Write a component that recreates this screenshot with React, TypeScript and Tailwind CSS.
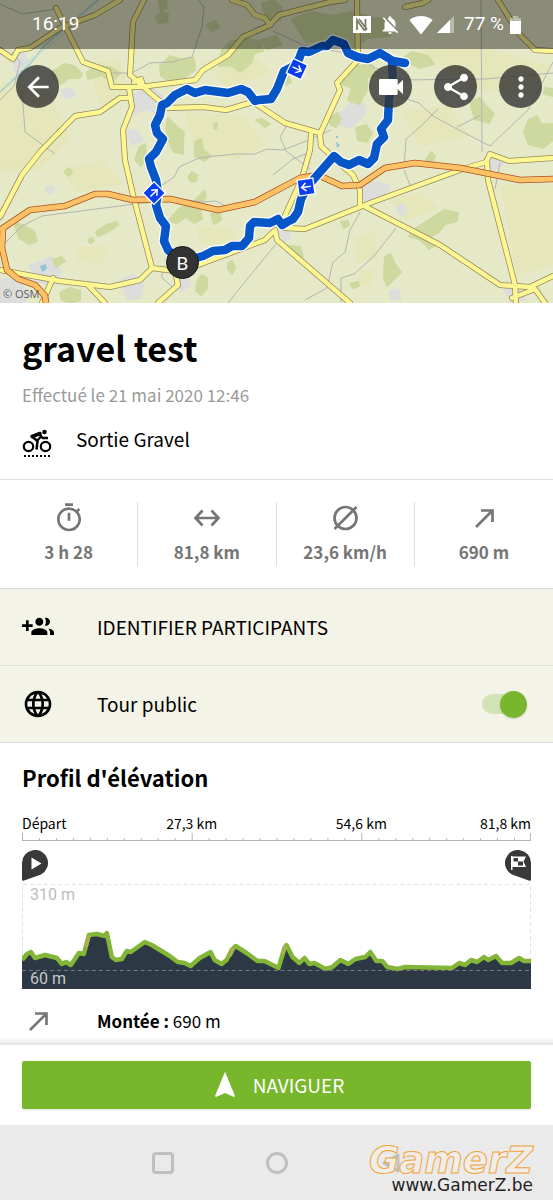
import { useState } from "react";
import type { ReactNode } from "react";
import {
  MdArrowBack,
  MdLanguage,
  MdMoreVert,
  MdNavigation,
  MdNotificationsOff,
  MdOutlineTimer,
  MdShare,
  MdSignalWifi4Bar,
  MdVideocam,
} from "react-icons/md";

const FOREST = [
  "M52 72l12-8 10 2 8 8-3 4-10 0-8 6-7-5z",
  "M159 1l7-1 1 8-6 4z",
  "M156 18l5-5 7 1-1 8-8 1z",
  "M207 25l8-4 4 6-7 4z",
  "M222 50l8-8 14-4 16 3 3 10-9 2-3 10-11 9-9-7-12 1z",
  "M160 66l10-10 10 3 14-1 1 12-12 9-14 2-8-5z",
  "M168 118l8 8 8 6-1 10 0 12-9-2-5-10-3-12z",
  "M195 142l6-3 2 11 8 6-7 5-9-5z",
  "M87 72l10-6 13 1 10 6-8 9-10-7-14 4z",
  "M262 4l12-4 8 8-2 12-14-2z",
  "M262 40l14-4 6 9-16 4z",
  "M292 20l18-8 22 4 20-4 22 6 20 2-4 16-22 2-16 10-22-8-24 2z",
  "M345 74l12-8 14-2 6 10-10 4 0 12-8 14-11-4 4-12-10-4z",
  "M356 128l10-3 6 8-5 9-9-2z",
  "M400 60l12-8 16 4 6 8-14 4-8-4z",
  "M470 102l10-4 6 8 8 8-5 9-14-4z",
  "M524 132l5-12 8-4 4 8 12 0 0 16-10 8-14-4z",
  "M416 228l16-10 12-8 14 3-1 8-12 3-6 8-8 4 5 9-7 4-8-9-12-4z",
  "M385 257l5-3 5 10 6 8-6 6-8 8-3-8z",
  "M96 232l10-7 11-3 1 3-12 8-8 3z",
  "M88 240l4-2 2 3-4 2z",
  "M66 170l3-2 3 4-3 4-4-3z",
  "M168 221l12-13 12-4 12-13 2 4-6 14 2 10-8 4-8-6-9 6z",
  "M188 177l4-5 5 3-1 6-5 1z",
  "M211 214l9 0 1 6-7 4z",
  "M14 222l8 3 12 6 3 10-8 3-10-6z",
  "M53 260l8-3 4 4-9 6z",
  "M60 293l10-5 10 3 0 9-9 3-9-3z",
  "M197 282l5-7 5 3 0 10-6 7-5-4z",
  "M228 263l4-2 3 6-3 7-4-5z",
  "M135 160l4-12 6-4 1 12-5 10z",
  "M288 246l12 1 3 10-10-4z",
  "M341 222l7-1 1 4-5 3z",
  "M350 284l8-2 1 4-6 2z",
  "M426 160l5-8 4 4-2 6z",
  "M545 88l8 1 0 7-9-2z",
  "M214 124l3-1 0 5-3 1z",
  "M256 120l6-1 8 5-5 3z",
  "M331 117l6-4 4 6-5 8-6-3z",
  "M284 79l4-3 3 6-5 3z",
];

const MEADOW = [
  "M0 80L50 92 70 140 40 170 0 172z",
  "M88 62l32-2 10 40-30 6z",
  "M185 112l60 4 20 30-30 14-40-8z",
  "M0 130l30-15 18 40-48 12z",
  "M62 170l40-10 20 24-45 8z",
  "M200 62l50-10 20 20-40 16z",
  "M420 50l60-4 70 20-20 30-60-8z",
  "M400 112l50-6 20 30-50 10z",
  "M500 185l53 0 0 80-36 10z",
  "M355 238l20-6 2 26-22 5z",
  "M76 245l32 2-4 18-26-4z",
  "M196 226l36 2 4 14-36 2z",
  "M390 200l30-8 18 16-32 12z",
  "M360 270l14 0-4 18-14-4z",
];

const TOWN = [
  "M134 94l16-6 14 10-2 14-18-3-10 4z",
  "M62 91l9-2 4 6-9 3z",
  "M14 58l8-6 6 10-8 14-6-6z",
  "M345 110l8-10 10 3 2 10-14 14-12-4z",
  "M336 116l5-4 5 8-5 5z",
  "M361 188l14-6 14 4-8 13-16 2z",
  "M372 190l10-4 3 6-9 4z",
  "M397 208l6-3 3 6-5 4z",
  "M30 266l22-8 8 12-4 14-18-3z",
  "M0 280l16 0 14 14-8 9-22 0z",
  "M122 280l10-5 11 8-3 14-12 2z",
  "M172 274l14 2 4 9-10 6z",
  "M46 188l6-1 2 4-6 2z",
  "M487 153l12 3 4 8-11 6z",
  "M504 287l16-2 4 14-13 2z",
  "M278 228l10 0 2 10-8 4z",
  "M128 132l8-2 6 10-10 4z",
  "M390 292l8-2 2 8-7 2z",
];

const TRACKS = [
  "M0 4l22 10 34-5",
  "M0 100l14-14 6-24-8-10",
  "M22 90l3 42 30 22",
  "M112 73l20 0 18-10 22-1 20-5 10-30 2-20-12-16-26-2",
  "M158 188l16-11 5-10 20-9 16-2 22-2 18 0 12-5 16 1 26-10 22-10",
  "M0 248l14-14 8-8 20-10 93-12 45-5 22 3 14-1 11 6",
  "M228 303l20-25 28-34",
  "M162 270l0 8 14 12",
  "M273 31l30 14 42 8 55 27 85-1 68-6",
  "M481 0l1 152",
  "M395 95l24 8 14 13 24 13 33 17 38-36 25-48",
  "M420 127l-14 12-2 30",
  "M420 127l18-18",
  "M457 127l24-12",
  "M360 212l-10 18-5 22-12 10-6 26-22 12",
  "M396 228l-22 28-20 18-13 4 0 24",
  "M404 170l6 15",
  "M500 163l-5 26",
  "M273 175l20-16 20-8",
  "M287 125l-7 12 6 14 24 18",
];

const ROADS = [
  "M0 50L13 59 18 50 30 48 60 28 95 15 120 0",
  "M56 8L83 62 108 71 112 87 140 87 195 80 203 70 228 55 243 37 270 25 279 15 330 2 345 0",
  "M144 0L133 22 130 75 136 80 150 93 168 108 203 107 226 110 253 102 285 123 320 133",
  "M134 82L141 79 143 86",
  "M232 0L247 5 255 15 265 18 270 25",
  "M0 217L22 175 40 152 75 116 100 112 120 98 130 98",
  "M129 88L132 107 123 130 125 160 133 195 152 268 175 271 178 285 158 303",
  "M357 0L358 60 337 83 340 90 320 134 321 146 338 162 353 175 360 190 360 207",
  "M311 134L310 150 302 178 283 220",
  "M405 7L423 3 428 0",
  "M498 0L520 35 535 50 553 51",
  "M285 228L305 229 370 203 460 170 486 162 490 154 509 161 553 158",
  "M366 207L440 245 500 285 530 287 553 276",
  "M487 160L488 180 515 285 516 303",
  "M512 298L535 289 545 303",
  "M198 265L265 240 275 230 277 240 350 303",
  "M0 270L60 281 110 287 140 280 152 268",
  "M53 278L42 303",
  "M88 285L105 303",
];

const MOTORWAYS = [
  "M0 230L30 210 65 206 95 194 108 194 133 200 170 199 218 210 255 202 300 178 318 175 342 186 360 185 385 168 415 163 460 168 520 180 553 179",
  "M3 228L2 248 7 270 18 279 35 285 45 296 46 303",
];

const ROUTE = [
  "M182 262L168 250 164 241 166 226 160 218 156 205 158 193 156 180 151 167 149 159 156 152 163 139 157 133 155 125 160 115 162 105 167 103 175 95 187 89 195 93 205 90 228 93 241 89 248 92 255 101 259 100 271 99 277 89 284 71 292 67 299 59 302 51 309 52 322 46 327 46 333 40 344 44 348 53 357 57 368 59 380 53 393 61 405 63",
  "M392 64L393 84 389 98 388 120 381 129 384 137 377 144 374 158 368 164 359 160 349 165 341 162 334 156 320 172 308 186 301 199 298 212 293 219 287 222 282 225 278 219 270 223 254 222 250 226 249 238 242 246 232 246 225 250 213 251 203 256 182 262",
];

const ELEVATION =
  "0,77 5,71 9,69 13,75 23,72 35,75 40,81 44,79 49,82 57,70 62,71 67,52 75,51 83,53 85,50 90,74 94,77 100,76 105,68 109,69 123,59 130,62 148,73 156,79 163,80 169,83 178,75 189,69 193,77 200,81 205,77 210,67 214,63 225,70 236,78 243,78 251,82 257,85 263,65 265,62 271,74 278,80 283,75 288,81 293,80 304,86 311,84 319,77 327,81 334,76 344,74 349,69 355,78 361,78 366,84 376,86 384,84 431,85 438,80 444,82 450,77 456,79 463,74 467,77 475,73 481,80 490,80 498,75 503,78 510,78";

const TICKS = Array.from({ length: 31 }, (_, i) => i);

function RouteArrow({ x, y, angle }: { x: number; y: number; angle: number }) {
  return (
    <g transform={`translate(${x} ${y}) rotate(${angle})`}>
      <rect x="-8" y="-8" width="16" height="16" fill="#0a3ff0" stroke="#fff" strokeWidth="1.3" />
      <path d="M-5 0H4M0-4L4.500 0 0 4" fill="none" stroke="#fff" strokeWidth="1.500" />
    </g>
  );
}

function RouteMap() {
  return (
    <svg
      className="absolute inset-0 h-full w-full"
      viewBox="0 0 553 303"
      preserveAspectRatio="xMidYMid slice"
      role="img"
      aria-label="Carte du tour"
    >
      <rect width="553" height="303" fill="#e6e9c8" />
      {MEADOW.map((d) => <path key={d} d={d} fill="#e5e6b9" strokeLinejoin="round" />)}
      {TOWN.map((d) => <path key={d} d={d} fill="#dddddb" stroke="#dddddb" strokeWidth="3" strokeLinejoin="round" />)}
      {FOREST.map((d) => <path key={d} d={d} fill="#cdd99e" stroke="#cdd99e" strokeWidth="2" strokeLinejoin="round" />)}
      <path d="M0 92L30 64 45 45 70 24 98 0" fill="none" stroke="#b0d3cf" strokeWidth="2" />
      <path d="M20 66L42 52 62 36 92 2" fill="none" stroke="#c3dcd0" strokeWidth="1" />
      <path d="M40 266l6-2 1 5-5 3zM336 142l4 3-3 3zM336 136l2 0 0 2-2 0z" fill="#8fc6cf" />
      <g fill="none" stroke="#b4b5b2" strokeWidth="1">
        {TRACKS.map((d) => <path key={d} d={d} />)}
      </g>
      <g fill="none" strokeLinejoin="round">
        {ROADS.map((d) => <path key={d} d={d} stroke="#98895c" strokeWidth="6" strokeLinecap="round" />)}
        {ROADS.map((d) => <path key={d} d={d} stroke="#fdf793" strokeWidth="4.500" strokeLinecap="round" />)}
        {MOTORWAYS.map((d) => <path key={d} d={d} stroke="#a9501f" strokeWidth="6.500" />)}
        {MOTORWAYS.map((d) => <path key={d} d={d} stroke="#fdc265" strokeWidth="5" />)}
        {ROUTE.map((d) => <path key={d} d={d} stroke="#fff" strokeWidth="11" strokeLinecap="round" />)}
        {ROUTE.map((d) => <path key={d} d={d} stroke="#0756c8" strokeWidth="8.500" strokeLinecap="round" />)}
      </g>
      <RouteArrow x={297} y={69} angle={25} />
      <RouteArrow x={154} y={193} angle={-45} />
      <RouteArrow x={306} y={187} angle={172} />
      <circle cx="182.500" cy="262.500" r="16" fill="#333" stroke="#151515" strokeWidth="1" />
      <text x="182.500" y="269.500" textAnchor="middle" fill="#fff" fontSize="19" fontFamily="Roboto, sans-serif">B</text>
      <text x="3" y="298" fill="#5d5d5d" fontSize="11" fontFamily="'Open Sans', sans-serif">© OSM</text>
    </svg>
  );
}

function RoundButton({ label, children }: { label: string; children: ReactNode }) {
  return (
    <button aria-label={label} className="flex size-[43px] items-center justify-center rounded-full bg-[#333]/80 text-white">
      {children}
    </button>
  );
}

function StatusBar() {
  return (
    <div className="relative flex h-[49px] items-center justify-between bg-black/40 px-8 font-['Roboto',sans-serif] text-[19px] text-white">
      <span>16:19</span>
      <div className="flex items-center">
        <svg className="mr-2 h-[17px] w-[18px]" viewBox="0 0 18 17">
          <path d="M0 0h18v17H0z" fill="#fff" />
          <path d="M4 14V4L11 14H12.500V3M6 3L14 13.500" fill="none" stroke="#77765f" strokeWidth="1.700" />
        </svg>
        <MdNotificationsOff className="mr-2 size-[22px]" />
        <MdSignalWifi4Bar className="mr-1 size-6" />
        <svg className="mr-[10px] size-[17px]" viewBox="0 0 17 17">
          <path d="M0 17L17 0v17z" fill="#fff" opacity=".4" />
          <path d="M0 17L13 4v13z" fill="#fff" />
        </svg>
        <span>77 %</span>
        <svg className="ml-[6px] h-[18px] w-[11px]" viewBox="0 0 11 18">
          <path d="M3 0h5v2h3v16H0V2h3z" fill="#fff" opacity=".4" />
          <path d="M0 5h11v13H0z" fill="#fff" />
        </svg>
      </div>
    </div>
  );
}

function GravelIcon() {
  return (
    <svg className="h-8 w-[30px]" viewBox="0 0 30 32" fill="none" stroke="#000">
      <circle cx="6.500" cy="19.500" r="4.700" strokeWidth="2.200" />
      <circle cx="23.500" cy="19.500" r="4.700" strokeWidth="2.200" />
      <circle cx="22.500" cy="5" r="2.300" fill="#000" stroke="none" />
      <path d="M10 9.500L18 6.500" strokeWidth="3.500" strokeLinecap="round" />
      <path d="M10.500 10L15.500 14 14.500 22.500" strokeWidth="2.500" strokeLinejoin="round" />
      <path d="M17.500 7L20.500 11H26" strokeWidth="2.300" strokeLinejoin="round" />
      <path d="M14.500 14.500L19 9.500" strokeWidth="2.200" />
      <path d="M2 29H29" strokeWidth="2" strokeDasharray="2 2" />
    </svg>
  );
}

function GroupAddIcon() {
  return (
    <svg className="mr-[43px] size-8" viewBox="0 0 24 24" fill="currentColor">
      <path d="M8 10H5V7H3v3H0v2h3v3h2v-3h3v-2zm10 1c1.66 0 2.990-1.340 2.990-3S19.660 5 18 5c-.32 0-.63.05-.91.14.57.81.9 1.790.9 2.860s-.34 2.040-.9 2.860c.28.09.59.14.91.14zm-5 0c1.660 0 2.990-1.340 2.990-3S14.660 5 13 5c-1.660 0-3 1.340-3 3s1.340 3 3 3zm6.620 2.160c.83.73 1.380 1.660 1.380 2.840v2h3v-2c0-1.540-2.370-2.490-4.380-2.840zM13 13c-2 0-6 1-6 3v2h12v-2c0-2-4-3-6-3z" />
    </svg>
  );
}

function DistanceIcon() {
  return (
    <svg className="size-8" viewBox="0 0 32 32" fill="none" stroke="currentColor" strokeWidth="2.700">
      <path d="M4 16H28M11.500 8.500L4.500 16 11.500 23.500M20.500 8.500L27.500 16 20.500 23.500" />
    </svg>
  );
}

function AverageIcon() {
  return (
    <svg className="size-8" viewBox="0 0 32 32" fill="none" stroke="currentColor" strokeWidth="2.700">
      <circle cx="16.500" cy="16" r="11" />
      <path d="M5.500 27L27.500 5" />
    </svg>
  );
}

function AscentIcon() {
  return (
    <svg className="size-8" viewBox="0 0 32 32" fill="none" stroke="currentColor" strokeWidth="2.700">
      <path d="M8 25L24 9M13 8.500H24.500V20" />
    </svg>
  );
}

const stats = [
  { label: "Durée", value: "3 h 28", icon: <MdOutlineTimer className="size-8" /> },
  { label: "Distance", value: "81,8 km", icon: <DistanceIcon /> },
  { label: "Vitesse moyenne", value: "23,6 km/h", icon: <AverageIcon /> },
  { label: "Dénivelé", value: "690 m", icon: <AscentIcon /> },
];

function ElevationProfile() {
  return (
    <section className="px-[22px] pt-[18px]">
      <h2 className="text-[22px] leading-8 font-bold">Profil d'élévation</h2>
      <div className="mt-5 grid grid-cols-[1fr_2fr_2fr_1fr] text-[14px] leading-5">
        <span>Départ</span>
        <span className="text-center">27,3 km</span>
        <span className="text-center">54,6 km</span>
        <span className="text-right whitespace-nowrap">81,8 km</span>
      </div>
      <svg className="h-2 w-full" viewBox="0 0 510 8" preserveAspectRatio="none" stroke="#b5b5b5">
        <path d="M0 7.500H510" />
        {TICKS.map((i) => (
          <path key={i} d={`M${Math.min(509.5, i * 17 + 0.5)} ${i % 10 === 0 ? 0 : 5}V8`} />
        ))}
      </svg>
      <div className="mt-[9px] flex justify-between">
        <svg className="h-[31px] w-[26px]" viewBox="0 0 26 31">
          <path d="M0 13A13 13 0 1 1 19 24.500L1.500 30.800Q0 31 0 29.500z" fill="#393939" />
          <path d="M9.500 7.500L19.500 13.500 9.500 19.500z" fill="#fff" />
        </svg>
        <svg className="h-[31px] w-[26px]" viewBox="0 0 26 31">
          <path d="M26 13A13 13 0 1 0 7 24.500L24.500 30.800Q26 31 26 29.500z" fill="#393939" />
          <path d="M6 6H7.500V20H6zM7.500 6.500H21L18.500 11.500 21 17H7.500z" fill="#fff" />
          <path d="M8.500 8H13V11.500H8.500zM13 11.500H18V15.500H13z" fill="#393939" />
        </svg>
      </div>
      <div className="relative mt-[2px] h-[106px] font-['Roboto',sans-serif] text-[16px] leading-5">
        <svg className="block h-full w-full" viewBox="0 0 510 106" preserveAspectRatio="none">
          <path d="M.5 106V1.500H509.500V106" fill="none" stroke="#e2e2e2" strokeDasharray="4 3" />
          <polygon points={`0,106 ${ELEVATION} 510,106`} fill="#2c3843" />
          <polyline points={ELEVATION} fill="none" stroke="#83b536" strokeWidth="4.500" strokeLinejoin="round" />
          <path d="M64 64L67 53M208 73L212 65M261 71L264 63" fill="none" stroke="#a8ae4d" strokeWidth="4" />
          <path d="M0 87.500H510" stroke="#737b80" strokeDasharray="4 3" />
        </svg>
        <span className="absolute top-[2px] left-2 text-[#bdbdbd]">310 m</span>
        <span className="absolute bottom-0 left-2 text-[#c4c8cb]">60 m</span>
      </div>
      <div className="flex h-12 items-center pt-4 text-[17px]">
        <div className="w-[75px] text-[#777]">
          <AscentIcon />
        </div>
        <p>
          <b>Montée :</b> 690 m
        </p>
      </div>
    </section>
  );
}

function NavigationBar() {
  return (
    <nav className="relative h-[76px] bg-[#eaeaea]">
      <div className="flex h-full items-center justify-center gap-[92px] text-[#bfbfbf]">
        <button aria-label="Applications récentes" className="size-[22px] rounded border-[3px] border-current" />
        <button aria-label="Accueil" className="size-[22px] rounded-full border-[3px] border-current" />
        <button aria-label="Retour">
          <svg className="size-[22px]" viewBox="0 0 22 22" fill="none" stroke="currentColor" strokeWidth="3">
            <path d="M18 3V19L4 11z" strokeLinejoin="round" />
          </svg>
        </button>
      </div>
      <div className="absolute right-5 bottom-2 text-right font-['DejaVu_Sans',sans-serif]">
        <div className="text-[37px] leading-8 font-bold text-[#f1eeea] italic [-webkit-text-stroke:1px_#f0a53a]">GamerZ</div>
        <div className="text-[17px] leading-4 text-[#222]">www.GamerZ.be</div>
      </div>
    </nav>
  );
}

export default function App() {
  const [isPublic, setIsPublic] = useState(true);

  return (
    <div className="flex min-h-screen flex-col bg-white font-['Noto_Sans_CJK_SC','Noto_Sans',sans-serif] text-black">
      <header className="relative h-[303px] overflow-hidden">
        <RouteMap />
        <StatusBar />
        <div className="relative flex items-center gap-[22px] pt-4 pr-[11px] pl-4">
          <RoundButton label="Retour">
            <MdArrowBack className="size-8" />
          </RoundButton>
          <div className="flex-1" />
          <RoundButton label="Vidéo">
            <MdVideocam className="size-8" />
          </RoundButton>
          <RoundButton label="Partager">
            <MdShare className="size-8" />
          </RoundButton>
          <RoundButton label="Plus d'options">
            <MdMoreVert className="size-8" />
          </RoundButton>
        </div>
      </header>

      <section className="border-b border-[#ddd] px-[22px] pt-5 pb-5">
        <h1 className="text-[34px] leading-[50px] font-bold">gravel test</h1>
        <p className="mt-2 text-[17px] leading-7 text-[#9a9a9a]">Effectué le 21 mai 2020 12:46</p>
        <div className="mt-4 flex items-start">
          <div className="w-[54px] pt-[2px]">
            <GravelIcon />
          </div>
          <span className="text-[19px] leading-7">Sortie Gravel</span>
        </div>
      </section>

      <section className="grid grid-cols-4 divide-x divide-[#ddd] py-[22px] text-[#757575]">
        {stats.map((stat) => (
          <div key={stat.label} className="flex h-16 flex-col items-center justify-between" title={stat.label}>
            {stat.icon}
            <span className="text-[17px] leading-7 font-bold">{stat.value}</span>
          </div>
        ))}
      </section>

      <section className="border-y border-[#ddd] bg-[#f4f3e8] text-[19px]">
        <button className="flex h-[77px] w-full items-center border-b border-[#ddd] px-[22px]">
          <GroupAddIcon />
          IDENTIFIER PARTICIPANTS
        </button>
        <div className="flex h-[76px] items-center px-[22px]">
          <MdLanguage className="mr-[43px] size-8" />
          <label htmlFor="public" className="flex-1">
            Tour public
          </label>
          <input
            id="public"
            type="checkbox"
            role="switch"
            checked={isPublic}
            onChange={(e) => setIsPublic(e.target.checked)}
            className="relative mr-1 flex h-7 w-[45px] appearance-none items-center before:h-5 before:w-9 before:rounded-full before:bg-[#d2e4b5] after:absolute after:left-0 after:size-[27px] after:rounded-full after:bg-[#78b62d] after:shadow-sm checked:after:left-[18px]"
          />
        </div>
      </section>

      <ElevationProfile />

      <footer className="mt-auto">
        <div className="h-2 bg-linear-to-b from-white to-[#e4e4e4]" />
        <div className="px-[22px] pt-4 pb-4">
          <button className="flex h-12 w-full items-center justify-center gap-3 rounded-xs bg-[#78b72c] text-[19px] text-white shadow-sm">
            <MdNavigation className="size-8" />
            NAVIGUER
          </button>
        </div>
        <NavigationBar />
      </footer>
    </div>
  );
}
